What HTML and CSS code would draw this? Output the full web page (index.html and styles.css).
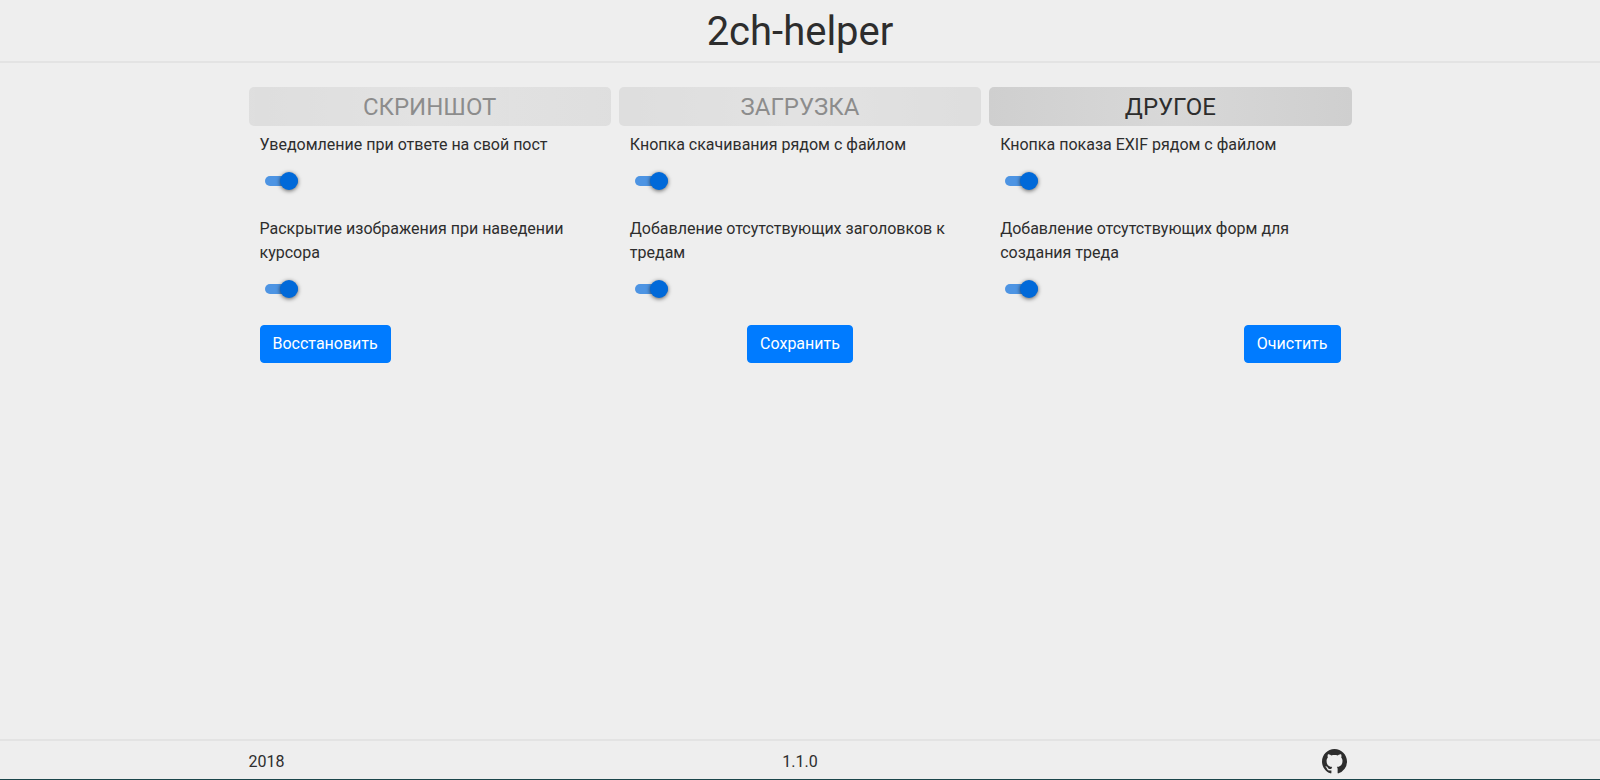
FILE: index.html
```html
<!DOCTYPE html>
<html lang="ru">
<head>
  <meta charset="utf-8">
  <meta name="viewport" content="width=device-width, initial-scale=1">
  <title>2ch-helper</title>
  <link rel="stylesheet" href="styles.css">
</head>
<body class="page">
  <header class="header">
    <h1 class="title">2ch-helper</h1>
  </header>

  <main class="container main">
    <nav class="tabs">
      <button type="button" class="tab">СКРИНШОТ</button>
      <button type="button" class="tab">ЗАГРУЗКА</button>
      <button type="button" class="tab tab-active">ДРУГОЕ</button>
    </nav>

    <form class="settings">
      <div class="option">
        <label for="notify">Уведомление при ответе на свой пост</label>
        <input type="checkbox" class="switch" id="notify" checked>
      </div>
      <div class="option">
        <label for="download">Кнопка скачивания рядом с файлом</label>
        <input type="checkbox" class="switch" id="download" checked>
      </div>
      <div class="option">
        <label for="exif">Кнопка показа EXIF рядом с файлом</label>
        <input type="checkbox" class="switch" id="exif" checked>
      </div>
      <div class="option">
        <label for="expand">Раскрытие изображения при наведении курсора</label>
        <input type="checkbox" class="switch" id="expand" checked>
      </div>
      <div class="option">
        <label for="titles">Добавление отсутствующих заголовков к тредам</label>
        <input type="checkbox" class="switch" id="titles" checked>
      </div>
      <div class="option">
        <label for="forms">Добавление отсутствующих форм для создания треда</label>
        <input type="checkbox" class="switch" id="forms" checked>
      </div>
      <div class="action"><button type="button" class="btn">Восстановить</button></div>
      <div class="action action-center"><button type="button" class="btn">Сохранить</button></div>
      <div class="action action-end"><button type="button" class="btn">Очистить</button></div>
    </form>
  </main>

  <footer class="footer">
    <div class="container footer-row">
      <span>2018</span>
      <span class="version">1.1.0</span>
      <a class="github" href="#" aria-label="GitHub">
        <svg viewBox="0 0 16 16" width="25" height="25" fill="currentColor" aria-hidden="true">
          <path d="M8 0C3.58 0 0 3.58 0 8c0 3.54 2.29 6.53 5.47 7.59.4.07.55-.17.55-.38 0-.19-.01-.82-.01-1.49-2.01.37-2.53-.49-2.69-.94-.09-.23-.48-.94-.82-1.13-.28-.15-.68-.52-.01-.53.63-.01 1.08.58 1.23.82.72 1.21 1.87.87 2.33.66.07-.52.28-.87.51-1.07-1.78-.2-3.64-.89-3.64-3.95 0-.87.31-1.59.82-2.15-.08-.2-.36-1.02.08-2.12 0 0 .67-.21 2.2.82.64-.18 1.32-.27 2-.27s1.36.09 2 .27c1.53-1.04 2.2-.82 2.2-.82.44 1.1.16 1.92.08 2.12.51.56.82 1.27.82 2.15 0 3.07-1.87 3.75-3.65 3.95.29.25.54.73.54 1.48 0 1.07-.01 1.93-.01 2.2 0 .21.15.46.55.38A8.01 8.01 0 0 0 16 8c0-4.42-3.58-8-8-8z"/>
        </svg>
      </a>
    </div>
  </footer>
</body>
</html>
```
FILE: styles.css
```css
* {
  box-sizing: border-box;
}

.page {
  display: flex;
  flex-direction: column;
  min-height: 100vh;
  margin: 0;
  border-bottom: 1px solid #1b454b;
  background: #eee;
  color: #2d2d2d;
  font: 16px/24px Roboto, "Liberation Sans", sans-serif;
}

.container {
  width: 100%;
  max-width: 1103px;
  margin: 0 auto;
}

.header {
  padding: 8px 16px 5px;
  border-bottom: 2px solid #e3e3e3;
  text-align: center;
}

.title {
  margin: 0;
  font-size: 40px;
  line-height: 48px;
  font-weight: 400;
}

.main {
  flex: 1;
  padding-top: 24px;
}

.tabs {
  display: grid;
  grid-template-columns: repeat(3, 1fr);
  gap: 8px;
}

.tab {
  height: 39px;
  padding: 0;
  border: 0;
  border-radius: 5px;
  background: radial-gradient(circle, #d8d8d8, #cfcfcf);
  color: #2d2d2d;
  font: inherit;
  font-size: 24px;
  opacity: 0.5;
  cursor: pointer;
}

.tab-active {
  opacity: 1;
}

.settings {
  display: grid;
  grid-template-columns: repeat(3, 1fr);
  column-gap: 8px;
  padding-top: 7px;
}

.option {
  display: flex;
  flex-direction: column;
  align-items: flex-start;
  gap: 19px;
  padding: 0 11px 31px;
}

.switch {
  appearance: none;
  display: flex;
  align-items: center;
  justify-content: flex-end;
  width: 33px;
  height: 10px;
  margin: 0 0 0 5px;
  border-radius: 5px;
  background: #4d94e3;
  cursor: pointer;
}

.switch::before {
  content: "";
  flex: none;
  width: 18px;
  height: 18px;
  border-radius: 50%;
  background: #0069d9;
  box-shadow: 0 1px 4px rgba(0, 0, 0, 0.6);
}

.switch:not(:checked) {
  justify-content: flex-start;
}

.action {
  display: flex;
  padding: 0 11px;
}

.action-center {
  justify-content: center;
}

.action-end {
  justify-content: flex-end;
}

.btn {
  padding: 6px 12px;
  border: 1px solid #007bff;
  border-radius: 4px;
  background: #007bff;
  color: #fff;
  font: inherit;
  cursor: pointer;
}

.footer {
  border-top: 2px solid #e3e3e3;
}

.footer-row {
  display: grid;
  grid-template-columns: 1fr auto 1fr;
  align-items: center;
  padding: 8px 0 5px;
}

.github {
  display: flex;
  justify-self: end;
  margin-right: 5px;
  color: #2d2d2d;
}
```
